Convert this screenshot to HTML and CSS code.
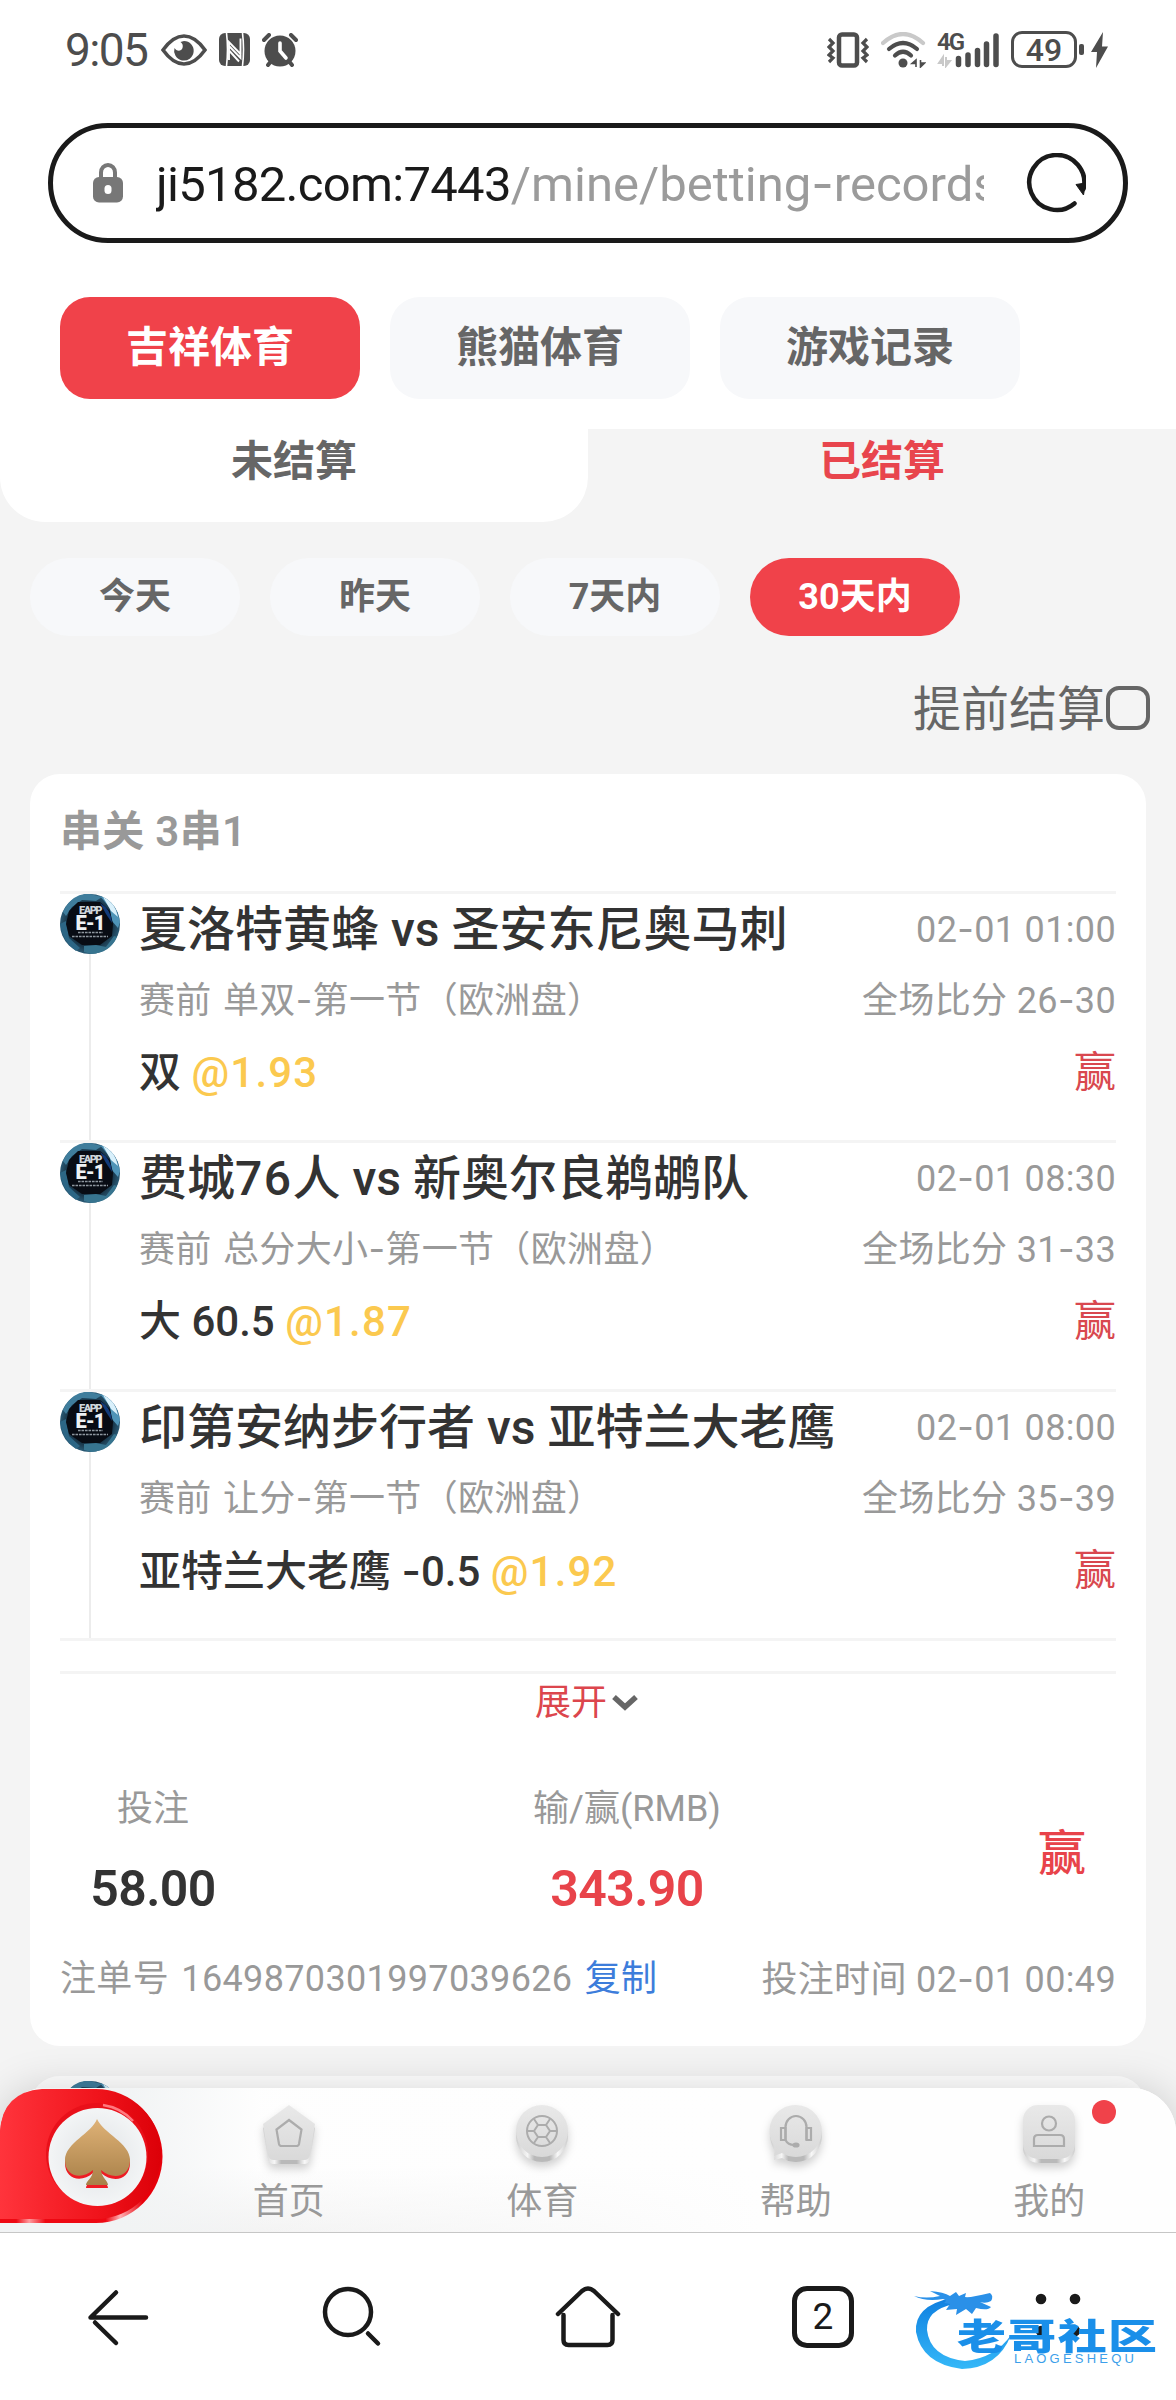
FILE: index.html
```html
<!DOCTYPE html>
<html lang="zh-CN">
<head>
<meta charset="utf-8">
<title>投注记录</title>
<link rel="stylesheet" href="styles.css">
</head>
<body>
<svg width="0" height="0" class="defs" aria-hidden="true">
  <defs>
    <radialGradient id="ballFill" cx=".5" cy=".5" r=".5">
      <stop offset=".6" stop-color="#0c1c2a"/><stop offset="1" stop-color="#2a5a75"/>
    </radialGradient>
    <linearGradient id="silver" x1="0" y1="0" x2="0" y2="1">
      <stop offset="0" stop-color="#e9e9e9"/><stop offset="1" stop-color="#d9d9d9"/>
    </linearGradient>
    <linearGradient id="rim" x1="0" y1="0" x2="1" y2="0">
      <stop offset="0" stop-color="#ccc"/><stop offset=".22" stop-color="#f6f6f6"/><stop offset=".35" stop-color="#b9b9b9"/><stop offset=".65" stop-color="#b9b9b9"/><stop offset=".8" stop-color="#f8f8f8"/><stop offset="1" stop-color="#ccc"/>
    </linearGradient>
    <symbol id="ball" viewBox="0 0 60 60">
      <circle cx="30" cy="30" r="30" fill="url(#ballFill)"/>
      <path d="M14 4Q22-1 30 0L42 3 36 7 22 6 12 13 6 22 3 18Q7 9 14 4Z" fill="#3f7d9c"/>
      <path d="M40 2Q56 7 60 28L58 34 51 26 50 14Z" fill="#4f94b8"/>
      <path d="M43 3Q55 8 58 23L51 17Z" fill="#d9f0fb"/>
      <path d="M0 30L6 27 9 44 20 54 16 57Q2 47 0 30Z" fill="#2c6685"/>
      <path d="M24 52L36 51 46 53 54 42 57 43Q50 59 31 60L24 58Z" fill="#37748f"/>
      <path d="M18 8L40 8 50 17 53 30 52 42 40 51H22L9 42 6 30 9 17Z" fill="#080c14"/>
      <path d="M40 9Q51 15 52 29L46 20Z" fill="#123b7a"/>
      <text x="30" y="19.500" class="ball-small">EAPP</text>
      <text x="30" y="35.500" class="ball-big">E-1</text>
      <path d="M18 38.5H43M12 42.500H48" stroke="#8e979f" stroke-width="1.600" stroke-dasharray="2.600 .9"/>
    </symbol>
  </defs>
</svg>

<div class="screen">
  <header class="status">
    <div class="status-side">
      <span class="clock">9:05</span>
      <svg width="46" height="32" viewBox="0 0 46 32"><path d="M2 16Q12 2 23 2T44 16Q34 30 23 30T2 16Z" fill="none" stroke="#4d4d4d" stroke-width="3.6"/><path d="M23 7A9.8 9.8 0 1 1 13.5 14C15 17 20 18 21.500 14 22.500 11 21 9 19.500 8Z" fill="#4d4d4d"/></svg>
      <svg width="31" height="33" viewBox="0 0 31 33" class="nfc"><rect width="31" height="33" rx="6" fill="#4d4d4d"/><path d="M7.500 0Q9.500 16 7.500 33M23.500 0Q25.500 16 23.500 33" stroke="#fff" stroke-width="1.600" fill="none"/><path d="M10 27V9L22 21.500M21.500 5.500V25L10 13M10.500 18L20 28.500" stroke="#fff" stroke-width="1.900" fill="none"/></svg>
      <svg width="36" height="34" viewBox="0 0 36 34" class="alarm"><circle cx="18" cy="18" r="15.500" fill="#4d4d4d"/><path d="M2 7L7 2M34 7L29 2M6 32l4-5M30 32l-4-5" stroke="#4d4d4d" stroke-width="4" stroke-linecap="round"/><path d="M18 10V18L24 25" stroke="#fff" stroke-width="3.600" stroke-linecap="round" fill="none"/></svg>
    </div>
    <div class="status-side">
      <svg width="42" height="36" viewBox="0 0 42 36"><rect x="12" y="2.500" width="18" height="31" rx="3" fill="none" stroke="#4d4d4d" stroke-width="4.500"/><path d="M2 7l4 4-4 4 4 4-4 4 4 3-4 4M40 7l-4 4 4 4-4 4 4 4-4 3 4 4" fill="none" stroke="#4d4d4d" stroke-width="3.200"/></svg>
      <svg width="45" height="36" viewBox="0 0 45 36" class="wifi"><path d="M2 11Q22-7 42 11" stroke="#c9c9c9" stroke-width="4.200" fill="none" stroke-linecap="round"/><path d="M8 17Q22 5 36 17M14 23.500Q22 16 30 23.500" stroke="#4d4d4d" stroke-width="4.200" fill="none" stroke-linecap="round"/><circle cx="22" cy="31" r="4.500" fill="#4d4d4d"/><path d="M35 35V28L31 31.500H35M39.500 28v7l4-4h-4" stroke="#4d4d4d" stroke-width="1.600" fill="#4d4d4d"/></svg>
      <div class="cell">
        <span class="cell-type">4G</span>
        <svg width="62" height="36" viewBox="0 0 62 36"><path d="M6 34V25L2 31H6M9 25v9l4-5H9" stroke="#c9c9c9" stroke-width="2" fill="#c9c9c9"/><path d="M21.500 26.500V32.500M31 23V32.500M40.500 18.500V32.500M49.500 12V32.500M59 4V32.500" stroke="#4d4d4d" stroke-width="5.500" stroke-linecap="round"/></svg>
      </div>
      <div class="battery"><span class="level">49</span><i class="nub"></i></div>
      <svg width="17" height="36" viewBox="0 0 17 36" class="bolt"><path d="M12 0L0 20H6L5 36 17 14.500H11Z" fill="#4d4d4d"/></svg>
    </div>
  </header>

  <div class="address">
    <svg width="30" height="40" viewBox="0 0 30 40"><path d="M8 17V9.500A7 7.500 0 0 1 22 9.500V17" fill="none" stroke="#777" stroke-width="4"/><rect y="14" width="30" height="25.500" rx="6" fill="#777"/><rect x="11.500" y="22" width="7" height="9" rx="3.500" fill="#fff"/></svg>
    <div class="url">ji5182.com:7443<span class="path">/mine/betting<span class="dash">-</span>records</span></div>
    <svg width="60" height="60" viewBox="0 0 60 60" class="reload"><path d="M48.500 50.500A27.500 27.500 0 1 1 57.500 36" fill="none" stroke="#1a1a1a" stroke-width="4.500" stroke-linecap="round"/><path d="M50 31.500L59.500 30 57.500 42Z" fill="#1a1a1a" stroke="#1a1a1a" stroke-linejoin="round"/></svg>
  </div>

  <nav class="sources">
    <a class="source active">吉祥体育</a><a class="source">熊猫体育</a><a class="source">游戏记录</a>
  </nav>

  <div class="settle">
    <a class="settle-tab idle">未结算</a><a class="settle-tab current">已结算</a>
  </div>

  <nav class="ranges">
    <a class="range">今天</a><a class="range">昨天</a><a class="range">7天内</a><a class="range active">30天内</a>
  </nav>

  <label class="early"><span>提前结算</span><i class="box"></i></label>

  <section class="card">
    <h2 class="card-title">串关 3串1</h2>
    <ul class="legs">
      <li class="leg">
        <div class="rail"><svg width="60" height="60"><use href="#ball"/></svg></div>
        <div class="leg-body">
          <div class="line match"><b>夏洛特黄蜂 vs 圣安东尼奥马刺</b><span class="meta">02<span class="dash">-</span>01 01:00</span></div>
          <div class="line meta"><span><span class="phase">赛前</span> 单双<span class="dash">-</span>第一节（欧洲盘）</span><span>全场比分 26<span class="dash">-</span>30</span></div>
          <div class="line pick"><span>双 <em>@1.93</em></span><span class="win">赢</span></div>
        </div>
      </li>
      <li class="leg">
        <div class="rail"><svg width="60" height="60"><use href="#ball"/></svg></div>
        <div class="leg-body">
          <div class="line match"><b>费城<span class="num">76</span>人 vs 新奥尔良鹈鹕队</b><span class="meta">02<span class="dash">-</span>01 08:30</span></div>
          <div class="line meta"><span><span class="phase">赛前</span> 总分大小<span class="dash">-</span>第一节（欧洲盘）</span><span>全场比分 31<span class="dash">-</span>33</span></div>
          <div class="line pick"><span>大 60.5 <em>@1.87</em></span><span class="win">赢</span></div>
        </div>
      </li>
      <li class="leg">
        <div class="rail"><svg width="60" height="60"><use href="#ball"/></svg></div>
        <div class="leg-body">
          <div class="line match"><b>印第安纳步行者 vs 亚特兰大老鹰</b><span class="meta">02<span class="dash">-</span>01 08:00</span></div>
          <div class="line meta"><span><span class="phase">赛前</span> 让分<span class="dash">-</span>第一节（欧洲盘）</span><span>全场比分 35<span class="dash">-</span>39</span></div>
          <div class="line pick"><span>亚特兰大老鹰 <span class="dash">-</span>0.5 <em>@1.92</em></span><span class="win">赢</span></div>
        </div>
      </li>
    </ul>
    <div class="expand">展开<svg width="28" height="18" viewBox="0 0 28 18"><path d="M3 4L14 14 25 4" fill="none" stroke="#666" stroke-width="5.500"/></svg></div>
    <div class="totals">
      <div class="total stake"><span class="label">投注</span><strong>58.00</strong></div>
      <div class="total profit"><span class="label">输/赢(RMB)</span><strong>343.90</strong></div>
      <div class="verdict">赢</div>
    </div>
    <div class="line meta order"><span>注单号 <span class="serial">1649870301997039626</span> <a class="copy">复制</a></span><span>投注时间 02<span class="dash">-</span>01 00:49</span></div>
  </section>

  <section class="card next"><svg width="60" height="60"><use href="#ball"/></svg></section>

  <nav class="tabbar">
    <div class="spade">
      <svg width="164" height="136" viewBox="0 0 164 136">
        <defs>
          <linearGradient id="red" x1="0" y1="0" x2="1" y2="0"><stop offset="0" stop-color="#ff343c"/><stop offset=".6" stop-color="#f0141c"/><stop offset="1" stop-color="#dc0008"/></linearGradient>
          <linearGradient id="gold" x1="0" y1="0" x2="0" y2="1"><stop offset="0" stop-color="#dfb277"/><stop offset="1" stop-color="#a88048"/></linearGradient>
          <linearGradient id="shine" x1="0" y1="0" x2="1" y2="0"><stop offset="0" stop-color="#ee0812"/><stop offset=".1" stop-color="#ee0812"/><stop offset=".18" stop-color="#ff9a9e"/><stop offset=".28" stop-color="#ee0812"/><stop offset=".65" stop-color="#ee0812"/><stop offset=".74" stop-color="#ffb0b3"/><stop offset=".88" stop-color="#e8000a"/></linearGradient>
          <radialGradient id="pearl"><stop offset="0" stop-color="#dfe2e5"/><stop offset="1" stop-color="#f3f5f6"/></radialGradient>
        </defs>
        <path d="M0 45Q2 5 42 2H96A66 66 0 0 1 96 135H0Z" fill="url(#shine)"/>
        <path d="M0 44Q2 4 42 1H96A65 65 0 0 1 96 131H0Z" fill="url(#red)"/>
        <circle cx="97" cy="66" r="51" fill="#e9101a"/>
        <path d="M103 17A50 50 0 0 1 133 33" stroke="#ff7a80" stroke-width="2.500" fill="none"/>
        <circle cx="97.500" cy="69" r="49" fill="url(#pearl)"/>
        <path d="M97 34C103 48 130 58 130 75C130 93 112 95 101 85C102 93 108 96 108 100H86C86 96 93 93 93 85C82 95 65 92 65 75C65 58 92 48 97 34Z" fill="#ee1c24"/>
        <path d="M97 31C103 45 130 55 130 72C130 90 112 92 101 82C102 90 108 93 108 97H86C86 93 93 90 93 82C82 92 65 89 65 72C65 55 92 45 97 31Z" fill="url(#gold)"/>
      </svg>
    </div>
    <a class="tab">
      <svg width="64" height="66" viewBox="0 0 64 66"><path d="M32 7L58 26 53 57Q52 62 47 62H17Q12 62 11 57L6 26Z" fill="url(#rim)"/><path d="M32 3L58 22 53 53Q52 58 47 58H17Q12 58 11 53L6 22Z" fill="url(#silver)"/><path d="M32 18L44.500 27.500 42 42Q41.500 44 39.500 44H24.500Q22.500 44 22 42L19.500 27.500Z" fill="none" stroke="#acacac" stroke-width="2.200"/></svg>
      <span>首页</span>
    </a>
    <a class="tab">
      <svg width="64" height="66" viewBox="0 0 64 66"><circle cx="32" cy="34" r="26" fill="url(#rim)"/><circle cx="32" cy="29" r="26" fill="url(#silver)"/><g fill="none" stroke="#acacac" stroke-width="2"><circle cx="32" cy="29" r="15"/><path d="M28 23H36L40 29 36 35H28L24 29ZM28 23L24 17M36 23L40 17M40 29H47M36 35L40 41M28 35L24 41M24 29H17"/></g></svg>
      <span>体育</span>
    </a>
    <a class="tab">
      <svg width="64" height="66" viewBox="0 0 64 66"><path d="M32 8A26 26 0 1 1 18 56L10 58 11 49A26 26 0 0 1 32 8Z" fill="url(#rim)"/><path d="M32 3A26 26 0 1 1 18 51L10 54 11 45A26 26 0 0 1 32 3Z" fill="url(#silver)"/><g fill="none" stroke="#acacac" stroke-width="2.200"><path d="M21.500 38V25A10.500 11 0 0 1 42.500 25V38M21.500 38Q24 43 30 43"/><path d="M17 26H21.500V38H17ZM42.500 26H47V38H42.500Z"/><ellipse cx="32" cy="43" rx="2.500" ry="1.500" fill="#acacac"/></g></svg>
      <span>帮助</span>
    </a>
    <a class="tab">
      <svg width="64" height="66" viewBox="0 0 64 66"><rect x="6" y="8" width="52" height="53" rx="15" fill="url(#rim)"/><rect x="6" y="3" width="52" height="54" rx="15" fill="url(#silver)"/><g fill="none" stroke="#acacac" stroke-width="2.200"><circle cx="32" cy="21.500" r="7"/><path d="M17 44V37Q17 33 21 33H43Q47 33 47 37V44Z"/></g></svg>
      <span>我的</span>
      <i class="dot"></i>
    </a>
  </nav>

  <footer class="browser">
    <svg width="235" height="167" viewBox="0 0 235 167"><path d="M146 84.500H90.500L116 59.500M95 89.500L116 110" class="ink"/></svg>
    <svg width="235" height="167" viewBox="235 0 235 167"><circle cx="348" cy="79" r="23" class="ink"/><path d="M368 100.500L378 110.500" class="ink"/></svg>
    <svg width="235" height="167" viewBox="470 0 235 167"><path d="M558 81L582 58Q588 53 594 58L618 81M563.500 82V107Q563.500 112 568.500 112H607.500Q612.500 112 612.500 107V82" class="ink"/></svg>
    <div class="windows"><span>2</span></div>
    <div class="more">
      <svg width="236" height="167" viewBox="940 0 236 167"><g fill="#1a1a1a"><circle cx="1041" cy="66" r="5.300"/><circle cx="1075" cy="66" r="5.300"/><circle cx="1041" cy="98" r="5.300"/><circle cx="1075" cy="98" r="5.300"/></g></svg>
    </div>
  </footer>

  <div class="brand">
    <svg width="110" height="90" viewBox="0 0 110 90">
      <defs><linearGradient id="blue" x1="0" y1="0" x2="0" y2="1"><stop offset="0" stop-color="#0f7fe0"/><stop offset="1" stop-color="#35b8f8"/></linearGradient></defs>
      <path d="M41 16Q4 24 6 50Q12 82 52 87Q88 86 101 53Q85 76 55 79Q20 75 17 48Q16 28 44 22Z" fill="url(#blue)"/>
      <path d="M4 14Q16 17 30 14L20 9Q34 10 40 14L46 10 49 14 56 11 55 15Q60 16 80 11Q84 14 81 19 76 22 70 20L81 25Q78 29 66 26L62 32 56 27 46 33 47 27 36 28 40 22 34 21Q38 18 33 17Q16 20 4 14Z" fill="#2a90e8"/>
    </svg>
    <div class="brand-name">老哥社区</div>
    <div class="brand-latin">LAOGESHEQU</div>
  </div>
</div>
</body>
</html>
```
FILE: styles.css
```css
* { box-sizing: border-box; margin: 0; padding: 0; }

body {
  width: 1176px;
  height: 2400px;
  overflow: hidden;
  background: #f4f4f4;
  color: #333;
  font-family: Roboto, "Noto Sans CJK SC", sans-serif;
  font-size: 36px;
}

svg { display: block; flex: none; }
.defs { position: absolute; }
i, em { font-style: normal; }
.dash { font-family: Inter, sans-serif; }

.screen {
  position: relative;
  width: 1176px;
  height: 2400px;
  overflow: hidden;
}

/* status bar */
.status {
  display: flex;
  justify-content: space-between;
  height: 99px;
  padding: 0 68px 0 65px;
  background: #fff;
  color: #4d4d4d;
}
.status-side { display: flex; align-items: center; }
.clock { width: 96px; font-size: 46px; letter-spacing: -1.6px; line-height: 99px; padding-top: 1px; }
.nfc { margin-left: 12px; }
.alarm { margin-left: 12px; }
.wifi { margin-left: 12px; }
.cell { position: relative; margin-left: 11px; }
.cell-type { position: absolute; left: 0; top: -2px; font-size: 24px; line-height: 24px; font-weight: 600; letter-spacing: -2px; }
.battery {
  position: relative;
  width: 66px;
  height: 37px;
  margin-left: 12px;
  border: 3px solid #4d4d4d;
  border-radius: 11px;
  text-align: center;
}
.level { display: block; font-size: 32px; line-height: 33px; font-weight: 500; }
.nub { position: absolute; right: -10px; top: 10px; width: 5px; height: 11px; border-radius: 2px; background: #4d4d4d; }
.bolt { margin-left: 14px; }

/* address bar */
.address {
  position: relative;
  z-index: 0;
  display: flex;
  align-items: center;
  height: 168px;
  padding: 0 45px 0 93px;
  background: #fff;
}
.address::before {
  content: "";
  position: absolute;
  z-index: -1;
  inset: 24px 48px;
  border: 5px solid #1a1a1a;
  border-radius: 60px;
}
.url {
  width: 828px;
  margin-left: 33px;
  padding-top: 2px;
  overflow: hidden;
  white-space: nowrap;
  font-size: 49px;
  line-height: 80px;
  letter-spacing: -.7px;
  color: #1a1a1a;
}
.path { color: #9b9b9b; letter-spacing: 0; }
.reload { margin-left: 42px; }

/* record source buttons */
.sources {
  display: flex;
  gap: 30px;
  height: 162px;
  padding: 30px 60px;
  background: #fff;
}
.source {
  width: 300px;
  height: 102px;
  border-radius: 30px;
  background: #f7f8fa;
  color: #666;
  font-size: 42px;
  font-weight: 700;
  line-height: 101px;
  text-align: center;
}
.source.active, .range.active { background: #f0424a; color: #fff; }

.settle { display: flex; height: 93px; }
.settle-tab { flex: 1; font-size: 42px; font-weight: 700; line-height: 65px; text-align: center; }
.idle { background: #fff; border-radius: 0 0 45px 45px; color: #666; }
.current { color: #e8454d; }

.ranges { display: flex; gap: 30px; padding: 36px 30px 0; }
.range {
  width: 210px;
  height: 78px;
  border-radius: 39px;
  background: #f7f8fa;
  color: #666;
  font-weight: 700;
  line-height: 78px;
  text-align: center;
}

.early {
  display: flex;
  align-items: center;
  justify-content: flex-end;
  height: 138px;
  padding: 6px 26px 0 0;
  font-size: 48px;
  color: #666;
}
.early span { padding-bottom: 6px; }
.box { width: 44px; height: 44px; margin-left: 1px; border: 4px solid #666; border-radius: 13px; }

/* bet card */
.card {
  height: 1272px;
  margin: 0 30px 30px;
  padding: 0 30px;
  border-radius: 30px;
  background: #fff;
}
.card-title { height: 117px; font-size: 42px; font-weight: 600; line-height: 115px; color: #999; letter-spacing: .3px; }
.legs { list-style: none; border-bottom: 3px solid #f4f4f4; }
.leg { display: flex; height: 249px; border-top: 3px solid #f4f4f4; }
.rail { width: 79px; background: linear-gradient(#ececec, #ececec) 29px 0 / 2px 100% no-repeat; }
.leg-body { flex: 1; }
.line { display: flex; justify-content: space-between; white-space: nowrap; }
.meta { color: #999; font-size: 36px; line-height: 70px; letter-spacing: .35px; }
.match { font-size: 48px; line-height: 71px; }
.match b { font-weight: 500; }
.num { letter-spacing: 1.5px; }
.phase { margin-right: 2px; }
.pick { font-size: 42px; line-height: 73px; font-weight: 500; }
.pick em { color: #fbc94f; letter-spacing: 1.2px; }
.win { color: #d9484f; font-weight: 400; }

.expand {
  display: flex;
  align-items: center;
  justify-content: center;
  gap: 4px;
  height: 93px;
  margin-top: 30px;
  padding: 0 2px 40px 0;
  border-top: 3px solid #f4f4f4;
  color: #dc464d;
}
.expand svg { margin-top: 6px; }
.totals { display: flex; height: 172px; margin-top: 6px; }
.total { display: flex; flex-direction: column; align-items: center; }
.stake { width: 186px; }
.profit { width: 762px; }
.label { color: #999; line-height: 78px; }
.total strong { font-size: 50px; font-weight: 600; line-height: 83px; letter-spacing: -.6px; }
.profit strong, .verdict { color: #e8434a; }
.verdict { margin-left: 30px; font-size: 48px; font-weight: 500; line-height: 168px; }
.order { padding-top: 2px; }
.serial { margin: 0 3px; }
.copy { color: #3d7ddb; }
.next { height: 200px; padding-top: 5px; }

/* app tab bar, floats over the list */
.tabbar {
  position: absolute;
  left: 0;
  top: 2088px;
  width: 1176px;
  height: 145px;
  display: flex;
  border-bottom: 1px solid #c6c6c6;
  border-radius: 45px 45px 0 0;
  background: linear-gradient(90deg, #f1f3f4 120px, rgba(253, 253, 253, .3) 260px, #fefefe 760px), linear-gradient(#fefefe 55%, #efefef);
  box-shadow: 0 0 42px rgba(0, 0, 0, .17);
}
.spade { width: 162px; }
.tab {
  position: relative;
  flex: 1;
  display: flex;
  flex-direction: column;
  align-items: center;
  padding-top: 14px;
  color: #999;
  line-height: 68px;
}
.tab svg { filter: drop-shadow(0 5px 4px rgba(0, 0, 0, .18)); }
.dot { position: absolute; right: 60px; top: 12px; width: 24px; height: 24px; border-radius: 50%; background: #f0424a; }

/* browser toolbar */
.browser {
  position: absolute;
  left: 0;
  top: 2233px;
  width: 1176px;
  height: 167px;
  display: flex;
  background: #fff;
}
.ink { fill: none; stroke: #1a1a1a; stroke-width: 4.5; stroke-linecap: round; stroke-linejoin: round; }
.windows { width: 235px; padding: 53px 0 0 87px; }
.windows span {
  display: block;
  width: 62px;
  height: 62px;
  border: 5px solid #1a1a1a;
  border-radius: 15px;
  color: #1a1a1a;
  font-size: 37px;
  line-height: 51px;
  text-align: center;
}

/* community mark over the toolbar */
.brand { position: absolute; left: 910px; top: 2282px; width: 250px; height: 95px; }
.brand-name {
  position: absolute;
  left: 47px;
  top: 34px;
  font: 900 36px/36px "Noto Sans CJK SC", sans-serif;
  letter-spacing: 1px;
  white-space: nowrap;
  color: #1a8fe9;
  transform: scaleX(1.36);
  transform-origin: 0 0;
}
.brand-latin {
  position: absolute;
  left: 104px;
  top: 70px;
  font: 13px/14px "Liberation Sans", sans-serif;
  letter-spacing: 3.2px;
  color: #3d9fea;
}

.ball-small { font: 900 11px Roboto, sans-serif; fill: #cfd6dc; text-anchor: middle; letter-spacing: -1.5px; }
.ball-big { font: 900 20px Roboto, sans-serif; fill: #eef2f5; text-anchor: middle; letter-spacing: -1px; }
```
